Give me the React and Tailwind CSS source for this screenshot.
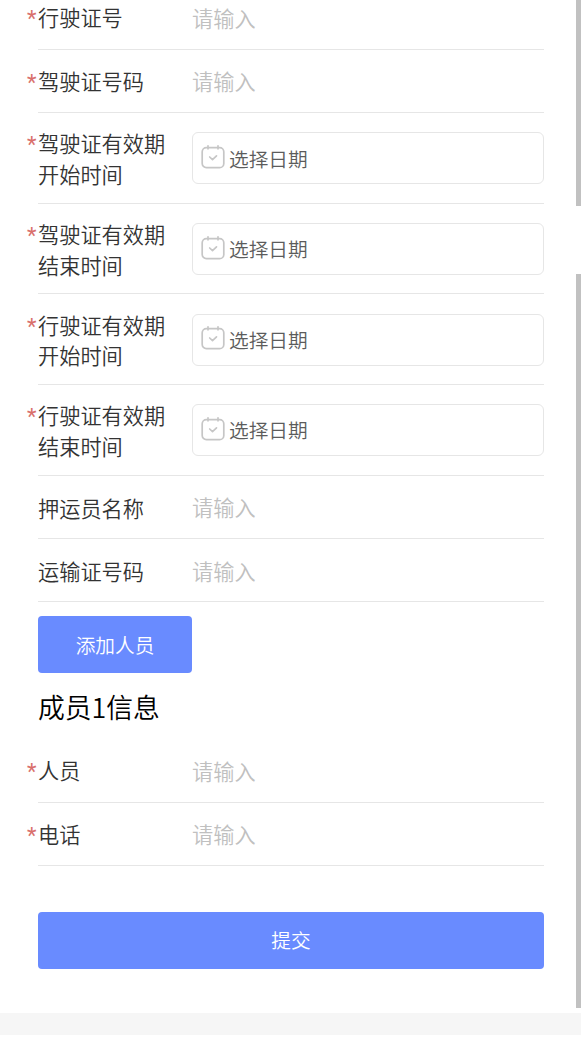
import React from 'react';

const vehicleFields = [
  { label: ['行驶证号'], type: 'text', required: true },
  { label: ['驾驶证号码'], type: 'text', required: true },
  { label: ['驾驶证有效期', '开始时间'], type: 'date', required: true },
  { label: ['驾驶证有效期', '结束时间'], type: 'date', required: true },
  { label: ['行驶证有效期', '开始时间'], type: 'date', required: true },
  { label: ['行驶证有效期', '结束时间'], type: 'date', required: true },
  { label: ['押运员名称'], type: 'text' },
  { label: ['运输证号码'], type: 'text' },
];

const memberFields = [
  { label: ['人员'], type: 'text', required: true },
  { label: ['电话'], type: 'text', required: true },
];

function CalendarIcon() {
  return (
    <svg
      width="24"
      height="26"
      viewBox="0 0 24 26"
      fill="none"
      stroke="#c6c6c6"
      strokeWidth="1.7"
      strokeLinecap="round"
      strokeLinejoin="round"
      className="shrink-0"
    >
      <rect x="1.2" y="3.6" width="21.6" height="20" rx="4.2" />
      <path d="M7 1.8v3M17 1.8v3" />
      <path d="M8.7 13l2.8 2.6 4-3.8" />
    </svg>
  );
}

function DatePicker() {
  return (
    <button
      type="button"
      className="mt-px flex h-[52px] w-full items-center rounded-md border border-[#e6e6e6] pl-2 text-[19.7px] leading-none text-[#5c5c5c]"
    >
      <span className="-mt-[3px] mr-1">
        <CalendarIcon />
      </span>
      选择日期
    </button>
  );
}

function FormRow({ field }) {
  const isDate = field.type === 'date';

  return (
    <div
      className={`flex items-center border-b border-[#e6e6e6] ${isDate ? 'h-[90.6px]' : 'h-[63.4px]'}`}
    >
      <label className="-ml-3 flex w-[166px] shrink-0 pt-0.5 text-[21.2px] leading-[30.5px] text-[#333]">
        <span className="w-3 shrink-0 pl-px pt-0.5 font-[Roboto] text-[22px] font-normal text-[#d9706c]">
          {field.required && '*'}
        </span>
        <span>
          {field.label.map((line) => (
            <span key={line} className="block whitespace-nowrap">{line}</span>
          ))}
        </span>
      </label>
      {isDate ? (
        <DatePicker />
      ) : (
        <input
          type="text"
          placeholder="请输入"
          className="h-8 min-w-0 flex-1 text-[21.2px] text-[#333] outline-none placeholder:text-[#c0c0c0]"
        />
      )}
    </div>
  );
}

export default function App() {
  return (
    <div className="h-[1037px] w-[583px] overflow-hidden bg-white pr-0.5 font-['Noto_Sans_CJK_SC',sans-serif] font-[350]">
      <div className="flex h-[1013px] overflow-hidden">
        <main className="-mt-[13.6px] w-[576px] shrink-0 pr-8 pl-[38px]">
          {vehicleFields.map((field) => (
            <FormRow key={field.label.join('')} field={field} />
          ))}

          <button
            type="button"
            className="mt-3.5 block h-[57px] w-[154px] rounded bg-[#698bff] text-[19.7px] text-white"
          >
            添加人员
          </button>

          <h2 className="flex h-[66px] items-center pt-0.5 text-[26.8px] text-black">成员1信息</h2>

          {memberFields.map((field) => (
            <FormRow key={field.label.join('')} field={field} />
          ))}

          <button
            type="button"
            className="mt-[45.4px] block h-[57px] w-full rounded bg-[#698bff] text-[19.7px] text-white"
          >
            提交
          </button>
        </main>

        <div className="flex w-[5px] flex-col gap-[68px]">
          <div className="h-[206px] bg-[#c1c1c1]" />
          <div className="h-[734px] bg-[#c1c1c1]" />
        </div>
      </div>
      <div className="h-[22px] bg-[#f6f6f6]" />
    </div>
  );
}
